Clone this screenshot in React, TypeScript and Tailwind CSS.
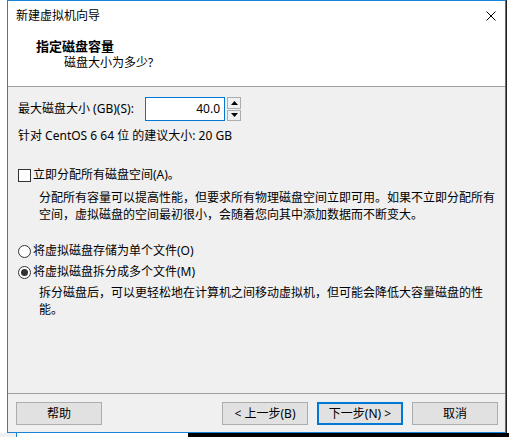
import React from 'react';

const font = { fontFamily: '"Noto Sans", "Noto Sans CJK SC", sans-serif' };

const Btn = ({ label, primary }: { label: string; primary?: boolean }) => (
  <button
    className={`w-[86px] h-[23px] bg-[#e1e1e1] text-[12px] leading-none text-black flex items-center justify-center ${
      primary ? 'border-2 border-[#0078d7]' : 'border border-[#adadad]'
    }`}
  >
    {label}
  </button>
);

const App = () => {
  return (
    <div className="w-[509px] h-[437px] bg-white overflow-hidden text-black" style={font}>
      <div className="flex">
        <div className="w-[7px]" />
        {/* dialog window */}
        <div className="w-[499px] h-[433px] border border-[#1883d7] bg-[#f0f0f0] flex flex-col">
          {/* title bar */}
          <div className="h-[29px] bg-white flex items-center justify-between pl-[8px] pr-[9px] text-[12px]">
            <span>新建虚拟机向导</span>
            <svg width="10" height="10" viewBox="0 0 10 10" className="mt-[1px]">
              <path d="M0.5 0.5 L9.5 9.5 M9.5 0.5 L0.5 9.5" stroke="#000" strokeWidth="1" />
            </svg>
          </div>

          {/* header */}
          <div className="h-[57px] bg-white border-b border-[#a0a0a0] pt-[8px] pl-[28px]">
            <div className="text-[13px] font-bold leading-[16px]">指定磁盘容量</div>
            <div className="text-[12px] leading-[16px] mt-[1px] pl-[28px]">磁盘大小为多少?</div>
          </div>

          {/* body */}
          <div className="flex-1 pl-[10px] pt-[10px] text-[12px]">
            <div className="flex items-center h-[24px]">
              <span className="w-[127px]">最大磁盘大小 (GB)(S):</span>
              <div className="w-[80px] h-[24px] bg-white border border-[#0078d7] flex items-center justify-end pr-[4px]">
                40.0
              </div>
              <div className="ml-[2px] w-[14px] h-[24px] flex flex-col gap-[1px]">
                <div className="flex-1 bg-[#f0f0f0] border border-[#adadad] flex items-center justify-center">
                  <svg width="7" height="4" viewBox="0 0 7 4">
                    <path d="M0 4 L3.5 0 L7 4 Z" fill="#000" />
                  </svg>
                </div>
                <div className="flex-1 bg-[#f0f0f0] border border-[#adadad] flex items-center justify-center">
                  <svg width="7" height="4" viewBox="0 0 7 4">
                    <path d="M0 0 L3.5 4 L7 0 Z" fill="#000" />
                  </svg>
                </div>
              </div>
            </div>
            <div className="mt-[7px] leading-[16px]">针对 CentOS 6 64 位 的建议大小: 20 GB</div>

            <div className="mt-[23px] flex items-center h-[16px]">
              <span className="w-[13px] h-[13px] border border-[#333] bg-white" />
              <span className="ml-[2px]">立即分配所有磁盘空间(A)。</span>
            </div>
            <p className="mt-[6px] ml-[21px] leading-[17px]">
              分配所有容量可以提高性能，但要求所有物理磁盘空间立即可用。如果不立即分配所有
              <br />
              空间，虚拟磁盘的空间最初很小，会随着您向其中添加数据而不断变大。
            </p>

            <div className="mt-[20px] flex items-center h-[16px]">
              <span className="w-[13px] h-[13px] rounded-full border border-[#333] bg-white" />
              <span className="ml-[2px]">将虚拟磁盘存储为单个文件(O)</span>
            </div>
            <div className="mt-[5px] flex items-center h-[16px]">
              <span className="w-[13px] h-[13px] rounded-full border border-[#333] bg-white flex items-center justify-center">
                <span className="w-[7px] h-[7px] rounded-full bg-[#333]" />
              </span>
              <span className="ml-[2px]">将虚拟磁盘拆分成多个文件(M)</span>
            </div>
            <p className="mt-[4px] ml-[21px] leading-[17px]">
              拆分磁盘后，可以更轻松地在计算机之间移动虚拟机，但可能会降低大容量磁盘的性
              <br />
              能。
            </p>
          </div>

          {/* footer */}
          <div className="border-t border-[#a0a0a0] pt-[8px] pb-[7px] pl-[8px] pr-[7px] flex">
            <Btn label="帮助" />
            <div className="flex-1" />
            <div className="flex gap-[9px]">
              <Btn label="< 上一步(B)" />
              <Btn label="下一步(N) >" primary />
              <Btn label="取消" />
            </div>
          </div>
        </div>
        <div className="w-[1px] h-[433px] bg-[#222]" />
      </div>
      <div className="flex h-[4px]">
        <div className="w-[16px] bg-[#f0f0f0]" />
        <div className="w-[1px] bg-[#1883d7]" />
        <div className="w-[171px] bg-white" />
        <div className="flex-1 bg-black" />
      </div>
    </div>
  );
};

export default App;
